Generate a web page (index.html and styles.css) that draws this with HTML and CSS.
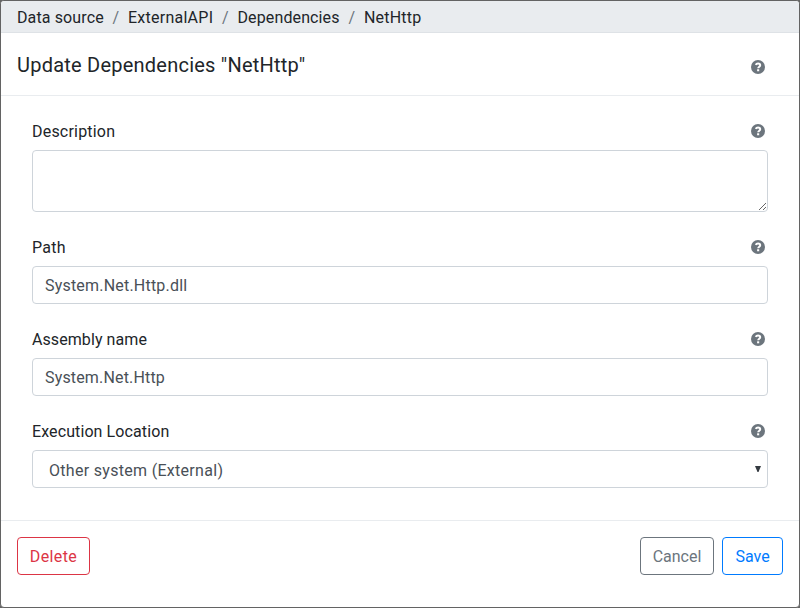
FILE: index.html
```html
<!DOCTYPE html>
<html lang="en">
<head>
<meta charset="utf-8">
<title>Update Dependencies</title>
<link rel="stylesheet" href="styles.css">
</head>
<body>
<svg class="defs" aria-hidden="true"><symbol id="help" viewBox="0 0 14 14"><circle cx="7" cy="7" r="7"/><path d="M4.700 4.900C5.200 3.900 6 3.500 7 3.500c1.300 0 2.200.7 2.200 1.700 0 1.500-2 1.500-2 3.100" fill="none" stroke="#fff" stroke-width="2"/><path d="M6.100 9.300h2.100v2H6.100z" fill="#fff"/></symbol></svg>
<div class="dialog">
  <nav class="crumbs">
    <span class="c1">Data source</span><span class="sep">/</span><span class="c2">ExternalAPI</span><span class="sep">/</span><span class="c3">Dependencies</span><span class="sep">/</span><span class="c4">NetHttp</span>
  </nav>
  <header class="header">
    <h1>Update Dependencies "NetHttp"</h1>
    <svg class="help"><use href="#help"/></svg>
  </header>
  <main class="body">
    <div class="group">
      <div class="row"><label for="description" class="l1">Description</label><svg class="help"><use href="#help"/></svg></div>
      <textarea id="description" class="control area"></textarea>
    </div>
    <div class="group">
      <div class="row"><label for="path" class="l2">Path</label><svg class="help"><use href="#help"/></svg></div>
      <input id="path" class="control v1" value="System.Net.Http.dll">
    </div>
    <div class="group">
      <div class="row"><label for="assembly" class="l3">Assembly name</label><svg class="help"><use href="#help"/></svg></div>
      <input id="assembly" class="control v2" value="System.Net.Http">
    </div>
    <div class="group">
      <div class="row"><span class="l4">Execution Location</span><svg class="help"><use href="#help"/></svg></div>
      <div class="control select"><span class="v3">Other system (External)</span><svg class="arrow" viewBox="0 0 6 6"><path d="M0 0h6L3.500 6h-1z"/></svg></div>
    </div>
  </main>
  <footer class="footer">
    <button class="btn delete">Delete</button>
    <button class="btn cancel">Cancel</button>
    <button class="btn save">Save</button>
  </footer>
</div>
</body>
</html>
```
FILE: styles.css
```css
* { box-sizing: border-box; }
body {
  margin: 0;
  background: #666;
  color: #212529;
  font: 16px/24px Roboto, "Noto Sans", sans-serif;
}
.defs { display: none; }
.dialog {
  display: flex;
  flex-direction: column;
  height: 608px;
  border: 1px solid #636363;
  border-radius: 4px;
  background: #fff;
  overflow: hidden;
}
.crumbs {
  display: flex;
  height: 32px;
  padding: 5px 16px 0;
  background: #e9ecef;
  border-bottom: 1px solid #dee2e6;
  white-space: nowrap;
}
.sep { width: 24.5px; text-align: center; color: #6c757d; }
.c1 { width: 86.5px; letter-spacing: .12px; }
.c2 { width: 85px; letter-spacing: .25px; }
.c3 { width: 102px; letter-spacing: .12px; }
.c4 { letter-spacing: .2px; }
.header {
  display: flex;
  justify-content: space-between;
  height: 63px;
  padding: 16px 34px 0 16px;
  border-bottom: 1px solid #e9ecef;
}
h1 { margin: 0; font-size: 20px; line-height: 32px; font-weight: 400; letter-spacing: .23px; }
.help { width: 14px; height: 14px; fill: #6c757d; }
.header .help { margin-top: 11px; }
.body { height: 424px; padding: 24px 31px 0; }
.group { margin-bottom: 24px; }
.row {
  display: flex;
  justify-content: space-between;
  align-items: center;
  height: 24px;
  margin-bottom: 6px;
  padding-right: 3px;
}
.row .help { margin-bottom: 2px; }
.l1 { letter-spacing: .2px; }
.l2 { letter-spacing: .3px; }
.l3 { letter-spacing: .08px; }
.l4 { letter-spacing: .1px; }
.control {
  display: block;
  width: 100%;
  height: 38px;
  padding: 6px 12px;
  border: 1px solid #ced4da;
  border-radius: 4px;
  background: #fff;
  color: #495057;
  font: inherit;
}
.control.v1 { letter-spacing: .2px; }
.control.v2 { letter-spacing: .16px; }
.v3 { letter-spacing: .3px; }
.area { height: 62px; resize: vertical; }
.select { display: flex; justify-content: space-between; align-items: center; padding: 3px 6px 0 16px; }
.arrow { width: 6px; height: 6px; fill: #343a40; margin-top: -4px; }
.footer {
  display: flex;
  gap: 8px;
  height: 86px;
  padding: 16px 16px 0;
  border-top: 1px solid #e9ecef;
}
.btn {
  height: 38px;
  padding: 2px 0 0;
  border: 1px solid;
  border-radius: 4px;
  background: #fff;
  font: inherit;
}
.delete { width: 73px; margin-right: auto; color: #dc3545; letter-spacing: .4px; }
.cancel { width: 74px; color: #6c757d; }
.save { width: 61px; color: #007bff; }
```
